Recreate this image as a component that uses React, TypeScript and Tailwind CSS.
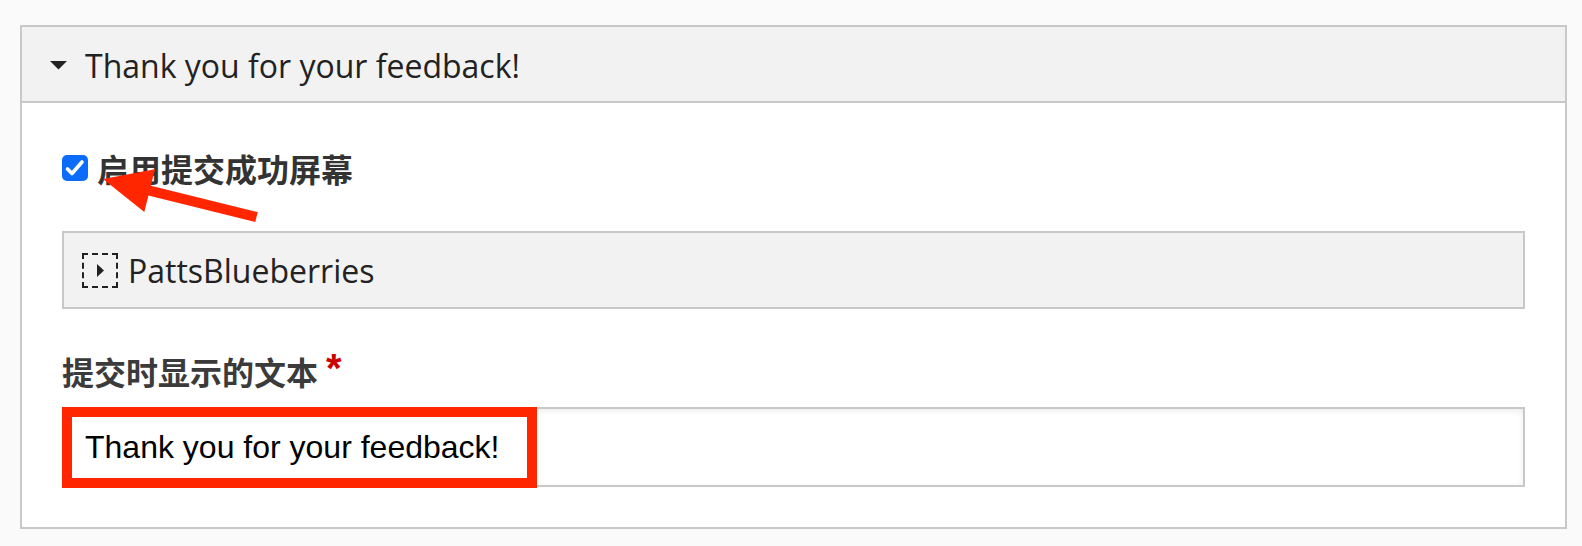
import React from 'react';

// Annotation arrow pointing at the checkbox
function RedArrow() {
  return (
    <svg
      className="absolute left-0 top-0 pointer-events-none"
      width="1582"
      height="546"
      viewBox="0 0 1582 546"
    >
      <polygon
        points="103,179 154.9,169.2 150.8,185.7 257.7,212.1 255.3,221.9 148.4,195.5 144.3,212"
        fill="#ff2600"
      />
    </svg>
  );
}

function CheckBox() {
  return (
    <svg width="26" height="26" viewBox="0 0 26 26" className="shrink-0">
      <rect x="0" y="0" width="26" height="26" rx="5" fill="#0b6cfb" />
      <path d="M5.5 14 L10 18.5 L20 7" fill="none" stroke="white" strokeWidth="3.6" strokeLinecap="round" strokeLinejoin="round" />
    </svg>
  );
}

export default function App() {
  return (
    <div className="relative w-[1582px] h-[546px] bg-[#fafafa] pt-[25px] pl-[20px] overflow-hidden">
      <div className="w-[1547px] h-[504px] border-2 border-[#c8c8c8] bg-white flex flex-col">
        {/* Details summary */}
        <div className="h-[76px] bg-[#f2f2f2] border-b-2 border-[#c8c8c8] flex items-center pl-[28px] shrink-0">
          <svg width="17" height="9" viewBox="0 0 17 9" className="shrink-0 mt-[2px]">
            <polygon points="0,0 17,0 8.5,8.5" fill="#222222" />
          </svg>
          <span className="ml-[18px] mt-[4px] text-[32px] leading-none text-[#222222] font-['Open_Sans',sans-serif]">
            Thank you for your feedback!
          </span>
        </div>

        <div className="px-[40px] flex flex-col">
          {/* Enable checkbox */}
          <div className="mt-[48px] h-[34px] flex items-center">
            <CheckBox />
            <span className="ml-[9px] text-[32px] leading-none font-bold text-[#333333] font-['Noto_Sans_CJK_SC',sans-serif]">
              启用提交成功屏幕
            </span>
          </div>

          {/* Webform element box */}
          <div className="mt-[46px] h-[78px] bg-[#f2f2f2] border-2 border-[#c8c8c8] flex items-center pl-[18px]">
            <div className="w-[36px] h-[35px] border-2 border-dashed border-[#222222] flex items-center justify-center shrink-0">
              <svg width="7" height="13" viewBox="0 0 7 13">
                <polygon points="0,0 7,6.5 0,13" fill="#222222" />
              </svg>
            </div>
            <span className="ml-[10px] mt-[2px] text-[32px] leading-none text-[#222222] font-['Open_Sans',sans-serif]">
              PattsBlueberries
            </span>
          </div>

          {/* Confirmation text */}
          <div className="mt-[44px] h-[36px] flex items-center">
            <span className="text-[32px] leading-none font-bold text-[#3b3b3b] font-['Noto_Sans_CJK_SC',sans-serif]">
              提交时显示的文本
            </span>
            <span className="ml-[8px] self-start -mt-[5px] text-[40px] leading-none font-bold text-[#cc0000] font-['Liberation_Sans',sans-serif]">
              *
            </span>
          </div>

          <div className="relative mt-[18px]">
            <div className="h-[80px] border-2 border-[#c8c8c8] bg-white shadow-[inset_0_2px_6px_rgba(0,0,0,0.08)] flex items-center pl-[21px]">
              <span className="text-[32px] leading-none text-black font-['Liberation_Sans',sans-serif]">
                Thank you for your feedback!
              </span>
            </div>
            <div className="absolute left-0 top-0 w-[475px] h-[81px] border-[10px] border-[#ff2600]" />
          </div>
        </div>
      </div>
      <RedArrow />
    </div>
  );
}
